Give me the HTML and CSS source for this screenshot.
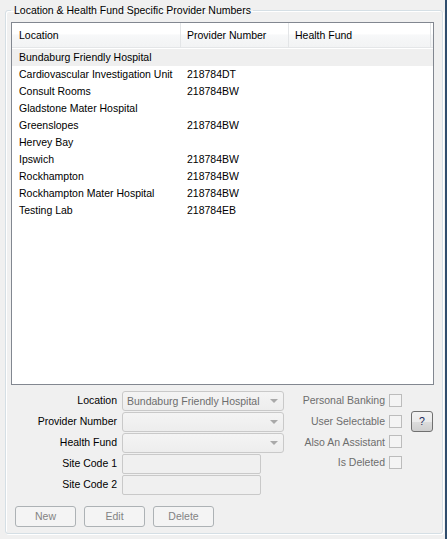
FILE: index.html
```html
<!DOCTYPE html>
<html>
<head>
<meta charset="utf-8">
<link rel="stylesheet" href="styles.css">
</head>
<body>
<div class="window">
  <fieldset class="group">
    <legend class="group-title">Location &amp; Health Fund Specific Provider Numbers</legend>
    <div class="listview">
      <div class="lv-header">
        <div class="lv-hcell c1">Location</div>
        <div class="lv-hcell c2">Provider Number</div>
        <div class="lv-hcell c3">Health Fund</div>
        <div class="lv-hcell c4"></div>
      </div>
      <div class="lv-body">
        <div class="lv-row selected"><span class="c1">Bundaburg Friendly Hospital</span><span class="c2"></span><span class="c3"></span></div>
        <div class="lv-row"><span class="c1">Cardiovascular Investigation Unit</span><span class="c2">218784DT</span><span class="c3"></span></div>
        <div class="lv-row"><span class="c1">Consult Rooms</span><span class="c2">218784BW</span><span class="c3"></span></div>
        <div class="lv-row"><span class="c1">Gladstone Mater Hospital</span><span class="c2"></span><span class="c3"></span></div>
        <div class="lv-row"><span class="c1">Greenslopes</span><span class="c2">218784BW</span><span class="c3"></span></div>
        <div class="lv-row"><span class="c1">Hervey Bay</span><span class="c2"></span><span class="c3"></span></div>
        <div class="lv-row"><span class="c1">Ipswich</span><span class="c2">218784BW</span><span class="c3"></span></div>
        <div class="lv-row"><span class="c1">Rockhampton</span><span class="c2">218784BW</span><span class="c3"></span></div>
        <div class="lv-row"><span class="c1">Rockhampton Mater Hospital</span><span class="c2">218784BW</span><span class="c3"></span></div>
        <div class="lv-row"><span class="c1">Testing Lab</span><span class="c2">218784EB</span><span class="c3"></span></div>
      </div>
    </div>

    <div class="form">
      <div class="fields">
        <label class="flabel">Location</label>
        <div class="combo"><span class="combo-text">Bundaburg Friendly Hospital</span><span class="arrow"></span></div>
        <label class="flabel">Provider Number</label>
        <div class="combo"><span class="combo-text"></span><span class="arrow"></span></div>
        <label class="flabel">Health Fund</label>
        <div class="combo"><span class="combo-text"></span><span class="arrow"></span></div>
        <label class="flabel">Site Code 1</label>
        <div class="textbox"></div>
        <label class="flabel">Site Code 2</label>
        <div class="textbox"></div>
      </div>
      <div class="checks">
        <div class="check"><span class="clabel">Personal Banking</span><span class="cbox"></span></div>
        <div class="check"><span class="clabel">User Selectable</span><span class="cbox"></span></div>
        <div class="check"><span class="clabel">Also An Assistant</span><span class="cbox"></span></div>
        <div class="check"><span class="clabel">Is Deleted</span><span class="cbox"></span></div>
      </div>
      <div class="help-wrap"><div class="help-btn">?</div></div>
    </div>

    <div class="buttons">
      <div class="btn disabled">New</div>
      <div class="btn disabled">Edit</div>
      <div class="btn disabled">Delete</div>
    </div>
  </fieldset>
</div>
</body>
</html>
```
FILE: styles.css
```css
* { box-sizing: border-box; }
html, body { margin: 0; padding: 0; }
body {
  background: #f0f0f0;
  font-family: "Liberation Sans", Arial, sans-serif;
  font-size: 10.5px;
  color: #000;
}
.window {
  width: 447px;
  height: 539px;
  padding: 4px 2px 5px 5px;
  border-right: 2px solid #2f4d6d;
  display: flex;
  flex-direction: column;
}
.group {
  margin: 0;
  flex: 1;
  border: 1px solid #d5dfe5;
  border-radius: 3px;
  box-shadow: 1px 1px 0 #ffffff, inset 1px 1px 0 #ffffff;
  padding: 5px 8px 5px 5px;
  min-width: 0;
  display: flex;
  flex-direction: column;
}
.group-title {
  padding: 0 2px 0 3px;
  line-height: 13px;
  margin-left: 0;
}
.listview {
  height: 363px;
  border: 1px solid #828790;
  background: #fff;
  display: flex;
  flex-direction: column;
}
.lv-header {
  display: grid;
  grid-template-columns: 169px 108px 142px 1fr;
  height: 25px;
  margin-bottom: 1px;
  background: linear-gradient(#ffffff 0%, #ffffff 45%, #f7f8f9 50%, #f2f3f4 100%);
  border-bottom: 1px solid #e4e6e8;
}
.lv-hcell {
  line-height: 25px;
  border-right: 1px solid #e3e5e7;
  white-space: nowrap;
}
.lv-hcell.c4 { border-right: 0; }
.lv-header .c1 { padding-left: 7px; }
.lv-header .c2 { padding-left: 6px; }
.lv-header .c3 { padding-left: 6px; }
.lv-body { flex: 1; }
.lv-row {
  display: grid;
  grid-template-columns: 169px 108px 1fr;
  height: 17px;
  line-height: 17px;
  white-space: nowrap;
}
.lv-row.selected { background: #efefef; }
.lv-row .c1 { padding-left: 7px; }
.lv-row .c2 { padding-left: 6px; }

.form {
  display: flex;
  margin-top: 6px;
}
.fields {
  display: grid;
  grid-template-columns: 106px 162px;
  grid-auto-rows: 20px;
  column-gap: 5px;
  row-gap: 1px;
  align-items: center;
}
.fields .textbox { width: 139px; }
.flabel {
  text-align: right;
  white-space: nowrap;
  line-height: 18px;
  align-self: start;
}
.combo {
  height: 20px;
  border: 1px solid #c9c9c9;
  border-radius: 3px;
  background: linear-gradient(#f4f4f4, #ededed);
  display: flex;
  align-items: center;
  padding-left: 4px;
  color: #6d6d6d;
}
.combo-text { flex: 1; white-space: nowrap; overflow: hidden; }
.arrow {
  width: 0; height: 0;
  border-left: 4px solid transparent;
  border-right: 4px solid transparent;
  border-top: 4px solid #a9a9a9;
  margin-right: 5px;
  margin-left: 4px;
}
.textbox {
  height: 20px;
  border: 1px solid #c9c9c9;
  border-radius: 2px;
  background: #f0f0f0;
}
.checks {
  width: 117px;
  margin-left: 1px;
  margin-top: -1px;
  display: grid;
  grid-auto-rows: 20.7px;
  align-content: start;
}
.check {
  display: flex;
  justify-content: flex-end;
  align-items: center;
  gap: 4px;
  color: #6d6d6d;
  white-space: nowrap;
}
.cbox {
  width: 13px;
  height: 13px;
  border: 1px solid #bcbcbc;
  background: #f4f4f4;
}
.help-wrap {
  padding-left: 9px;
  padding-top: 20px;
}
.help-btn {
  width: 22px;
  height: 21px;
  border: 1px solid #707070;
  border-radius: 3px;
  background: linear-gradient(#f2f2f2 0%, #ebebeb 50%, #dddddd 51%, #cfcfcf 100%);
  text-align: center;
  line-height: 19px;
  color: #1a2a5a;
}
.buttons {
  display: flex;
  gap: 8px;
  margin-top: 11px;
  padding-left: 4px;
}
.btn {
  width: 61px;
  height: 21px;
  border: 1px solid #adb2b5;
  border-radius: 3px;
  background: #f4f4f4;
  text-align: center;
  line-height: 19px;
}
.btn.disabled { color: #838383; }
```
